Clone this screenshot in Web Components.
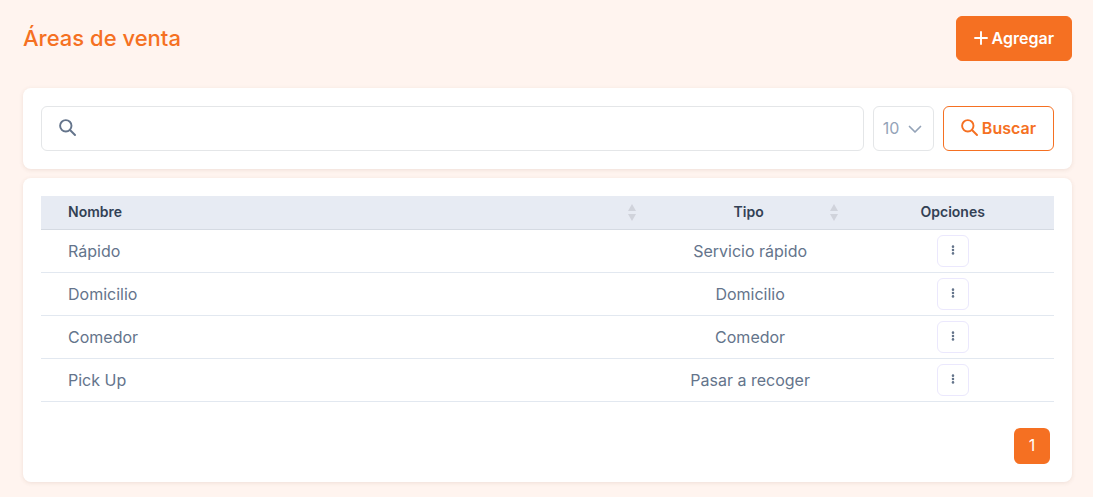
<!DOCTYPE html>
<html lang="es">
<head>
<meta charset="utf-8">
<meta name="viewport" content="width=device-width, initial-scale=1">
<title>Áreas de venta</title>
<style>
  :root {
    --brand: #f57022;
    --muted: #64748b;
    --line: #e2e8f0;
    --field-line: #e4e6e8;
  }
  body {
    margin: 0;
    background: #fff4ef;
    color: var(--muted);
    font: 16px/24px Inter, "Liberation Sans", sans-serif;
  }
</style>
</head>
<body>
<areas-page></areas-page>
<script>
const define = (name, html, setup) => {
  const template = document.createElement('template');
  template.innerHTML = html;
  customElements.define(name, class extends HTMLElement {
    constructor() {
      super();
      this.attachShadow({ mode: 'open' }).append(template.content.cloneNode(true));
    }
    connectedCallback() {
      if (setup) setup(this, this.shadowRoot);
    }
  });
};

const icons = {
  search: ['0 0 17 17', '<g fill="none" stroke="currentColor" stroke-width="1.900" stroke-linecap="round"><circle cx="6.800" cy="6.800" r="5.700"/><path d="M11 11L16 16"/></g>'],
  plus: ['0 0 14 14', '<path d="M7 1V13M1 7H13" fill="none" stroke="currentColor" stroke-width="1.900" stroke-linecap="round"/>'],
  chevron: ['0 0 14 14', '<path d="M1.500 4.500L7 10L12.500 4.500" fill="none" stroke="currentColor" stroke-width="1.700" stroke-linecap="round" stroke-linejoin="round"/>'],
  dots: ['0 0 16 16', '<g fill="currentColor"><circle cx="8" cy="3.500" r="1.700"/><circle cx="8" cy="8" r="1.700"/><circle cx="8" cy="12.500" r="1.700"/></g>'],
  sort: ['0 0 16 17', '<path d="M8 0L12 7H4ZM4 10H12L8 17Z" fill="#d0d3db"/>']
};

define('ui-icon', `
  <style>
    :host { display: block; width: 16px; height: 16px; flex: none; }
    svg { display: block; width: 100%; height: 100%; }
  </style>
  <svg aria-hidden="true"></svg>`,
  (host, root) => {
    const [box, shape] = icons[host.getAttribute('name')];
    const svg = root.querySelector('svg');
    svg.setAttribute('viewBox', box);
    svg.innerHTML = shape;
  });

define('ui-button', `
  <style>
    :host { display: block; flex: none; }
    button {
      display: flex; align-items: center; gap: 4px;
      box-sizing: border-box; height: 45px; padding: 0 17px 2px;
      border: 1px solid var(--brand); border-radius: 6px;
      background: var(--brand); color: #fff;
      font: inherit; font-weight: 600; cursor: pointer;
    }
    :host([outline]) button { background: #fff; color: var(--brand); }
  </style>
  <button type="button"><slot name="icon"></slot><slot></slot></button>`);

define('ui-card', `
  <style>
    :host {
      display: block; padding: 18px; border-radius: 8px;
      background: #fff; box-shadow: 0 1px 4px rgba(120, 70, 50, .12);
    }
  </style>
  <slot></slot>`);

define('page-header', `
  <style>
    :host { display: flex; align-items: center; justify-content: space-between; margin-bottom: 27px; }
    h1 { margin: 0; padding-bottom: 2px; color: var(--brand); font-size: 22px; line-height: 28px; font-weight: 500; }
  </style>
  <h1><slot></slot></h1>
  <slot name="action"></slot>`);

define('search-bar', `
  <style>
    :host { display: block; }
    form { display: flex; gap: 9px; }
    label {
      display: flex; align-items: center; box-sizing: border-box; height: 45px;
      border: 1px solid var(--field-line); border-radius: 6px; background: #fff;
    }
    .query { flex: 1; padding: 0 17px; gap: 12px; }
    .query ui-icon { margin-bottom: 2px; }
    ui-icon[name=search] { width: 17px; height: 17px; }
    input {
      flex: 1; min-width: 0; height: 100%; padding: 0; border: 0; outline: 0;
      background: none; color: inherit; font: inherit;
    }
    .size { display: grid; width: 61px; color: #94a3b8; }
    .size > * { grid-area: 1 / 1; }
    .size ui-icon { justify-self: end; width: 14px; height: 14px; margin-right: 11px; pointer-events: none; }
    select {
      width: 100%; height: 43px; padding: 0 0 1px 9px; border: 0; outline: 0;
      appearance: none; background: none; color: inherit; font: inherit;
    }
  </style>
  <form>
    <label class="query">
      <ui-icon name="search"></ui-icon>
      <input type="text" aria-label="Buscar área de venta">
    </label>
    <label class="size">
      <select aria-label="Registros por página">
        <option>10</option><option>25</option><option>50</option>
      </select>
      <ui-icon name="chevron"></ui-icon>
    </label>
    <ui-button outline><ui-icon slot="icon" name="search"></ui-icon>Buscar</ui-button>
  </form>`);

define('areas-table', `
  <style>
    :host { display: block; }
    table { width: 100%; table-layout: fixed; border-collapse: separate; border-spacing: 0; }
    th, td { box-sizing: border-box; padding: 0 27px; text-align: center; }
    th {
      height: 34px; padding-bottom: 1px; background: #e7ebf3; border-bottom: 1px solid #d5dae2;
      color: #334155; font-size: 14px; line-height: 20px; font-weight: 600;
    }
    td { height: 43px; border-bottom: 1px solid var(--line); }
    th:first-child, td:first-child { text-align: left; }
    th:nth-child(2), th:nth-child(3) { width: 20%; }
    .sortable { padding-right: 9px; }
    .head { display: flex; align-items: center; }
    .head span { flex: 1; }
    .head ui-icon { height: 17px; }
    .sortable + .sortable { padding-left: 22px; }
    button {
      display: grid; place-items: center; box-sizing: border-box;
      width: 32px; height: 32px; margin: 0 auto; padding: 0 0 2px;
      border: 1px solid #ebe8fd; border-radius: 6px;
      background: #fff; color: var(--muted); cursor: pointer;
    }
    button ui-icon { width: 12px; height: 12px; }
  </style>
  <table>
    <thead><tr>
      <th scope="col" class="sortable"><div class="head"><span>Nombre</span><ui-icon name="sort"></ui-icon></div></th>
      <th scope="col" class="sortable"><div class="head"><span>Tipo</span><ui-icon name="sort"></ui-icon></div></th>
      <th scope="col">Opciones</th>
    </tr></thead>
    <tbody></tbody>
  </table>`,
  (host, root) => {
    const rows = [
      ['Rápido', 'Servicio rápido'],
      ['Domicilio', 'Domicilio'],
      ['Comedor', 'Comedor'],
      ['Pick Up', 'Pasar a recoger']
    ];
    root.querySelector('tbody').innerHTML = rows.map(([name, type]) => `
      <tr><td>${name}</td><td>${type}</td>
      <td><button type="button" aria-label="Opciones de ${name}"><ui-icon name="dots"></ui-icon></button></td></tr>`).join('');
  });

define('page-nav', `
  <style>
    :host { display: block; margin-top: 26px; }
    nav { display: flex; justify-content: flex-end; padding-right: 4px; }
    a {
      display: grid; place-items: center; box-sizing: border-box;
      width: 36px; height: 36px; padding-bottom: 2px;
      border-radius: 6px; background: var(--brand); color: #fff; text-decoration: none;
    }
  </style>
  <nav aria-label="Paginación"><a href="#1" aria-current="page">1</a></nav>`);

define('areas-page', `
  <style>
    :host { display: block; padding: 16px 21px 15px 23px; }
    ui-card + ui-card { margin-top: 9px; }
    ui-icon[name=plus] { width: 14px; height: 14px; }
  </style>
  <page-header>Áreas de venta
    <ui-button slot="action"><ui-icon slot="icon" name="plus"></ui-icon>Agregar</ui-button>
  </page-header>
  <main>
    <ui-card><search-bar></search-bar></ui-card>
    <ui-card><areas-table></areas-table><page-nav></page-nav></ui-card>
  </main>`);
</script>
</body>
</html>
